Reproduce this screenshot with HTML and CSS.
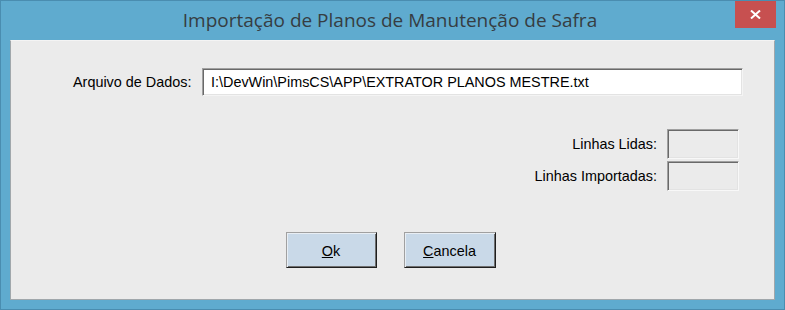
FILE: index.html
```html
<!DOCTYPE html>
<html lang="pt-BR">
<head>
  <meta charset="UTF-8">
  <title>Importação de Planos de Manutenção de Safra</title>
  <link rel="stylesheet" href="styles.css">
</head>
<body>

  <div class="window">
    <!-- Title bar -->
    <div class="titlebar">
      <span class="title">Importação de Planos de Manutenção de Safra</span>
      <div class="close-btn">
        <svg width="11" height="9" viewBox="0 0 11 9">
          <path d="M1 0.5 L10 8.5 M10 0.5 L1 8.5" stroke="#fff" stroke-width="2" fill="none"/>
        </svg>
      </div>
    </div>

    <!-- Client area -->
    <div class="client">
      <div class="file-row">
        <label class="file-label">Arquivo de Dados:</label>
        <div class="textbox">I:\DevWin\PimsCS\APP\EXTRATOR PLANOS MESTRE.txt</div>
      </div>

      <div class="stats">
        <div class="stat-row">
          <span class="stat-label">Linhas Lidas:</span>
          <div class="stat-box"></div>
        </div>
        <div class="stat-row">
          <span class="stat-label">Linhas Importadas:</span>
          <div class="stat-box"></div>
        </div>
      </div>

      <div class="buttons">
        <button class="btn btn-ok"><u>O</u>k</button>
        <button class="btn btn-cancel"><u>C</u>ancela</button>
      </div>
    </div>
  </div>

</body>
</html>
```

FILE: styles.css
```css
body {
  margin: 0;
  background-color: #5fabcf;
  font-family: 'Liberation Sans', Arial, sans-serif;
  overflow: hidden;
}

.window {
  position: relative;
  box-sizing: border-box;
  width: 785px;
  height: 310px;
  border: 1px solid #4a8db0;
  background-color: #5fabcf;
  padding: 0 8px 0 9px;
}

.titlebar {
  height: 39px;
  display: flex;
  align-items: center;
  justify-content: center;
}

.title {
  font-family: 'Open Sans', 'Noto Sans', sans-serif;
  font-size: 19px;
  color: #363d42;
  margin-top: -2px;
  margin-right: 6px;
}

.close-btn {
  position: absolute;
  top: 0;
  right: 8px;
  width: 41px;
  height: 27px;
  background-color: #c75050;
  display: flex;
  align-items: center;
  justify-content: center;
}

.client {
  box-sizing: border-box;
  width: 765px;
  height: 260px;
  background-color: #ebebeb;
  border-top: 1px solid #f4f4f4;
  border-left: 1px solid #a0a7ab;
  border-right: 1px solid #a0a7ab;
  border-bottom: 1px solid #a0a7ab;
  display: flex;
  flex-direction: column;
  font-size: 14.4px;
  color: #000;
}

.file-row {
  display: flex;
  align-items: center;
  gap: 12px;
  margin-top: 27px;
  padding-left: 62px;
}

.file-label {
  width: 117px;
  text-align: right;
  white-space: nowrap;
}

.textbox {
  box-sizing: border-box;
  width: 541px;
  height: 28px;
  background-color: #fff;
  border-top: 1px solid #a0a0a0;
  border-left: 1px solid #a0a0a0;
  border-right: 1px solid #f4f4f4;
  border-bottom: 1px solid #f4f4f4;
  box-shadow: inset 1px 1px 0 #696969, inset -1px -1px 0 #e3e3e3;
  padding: 5px 0 0 8px;
  white-space: nowrap;
}

.stats {
  display: flex;
  flex-direction: column;
  align-items: flex-end;
  gap: 2px;
  margin-top: 33px;
  margin-right: 35px;
}

.stat-row {
  display: flex;
  align-items: center;
  gap: 10px;
}

.stat-box {
  box-sizing: border-box;
  width: 72px;
  height: 30px;
  border-top: 1px solid #a0a0a0;
  border-left: 1px solid #a0a0a0;
  border-right: 1px solid #f8f8f8;
  border-bottom: 1px solid #f8f8f8;
  box-shadow: inset 1px 1px 0 #696969, inset -1px -1px 0 #e3e3e3;
}

.buttons {
  display: flex;
  justify-content: center;
  gap: 27px;
  margin-top: 41px;
  padding-right: 4px;
}

.btn {
  box-sizing: border-box;
  height: 36px;
  background-color: #c9d9e8;
  border-top: 1px solid #a0a0a0;
  border-left: 1px solid #a0a0a0;
  border-right: 1px solid #1e1e1e;
  border-bottom: 1px solid #1e1e1e;
  box-shadow: inset 1px 1px 0 #e8eef4, inset -1px -1px 0 #6f6f6f;
  font-family: 'Liberation Sans', Arial, sans-serif;
  font-size: 14.4px;
  color: #000;
  padding: 2px 0 0 0;
}

.btn-ok {
  width: 91px;
}

.btn-cancel {
  width: 92px;
}
```
